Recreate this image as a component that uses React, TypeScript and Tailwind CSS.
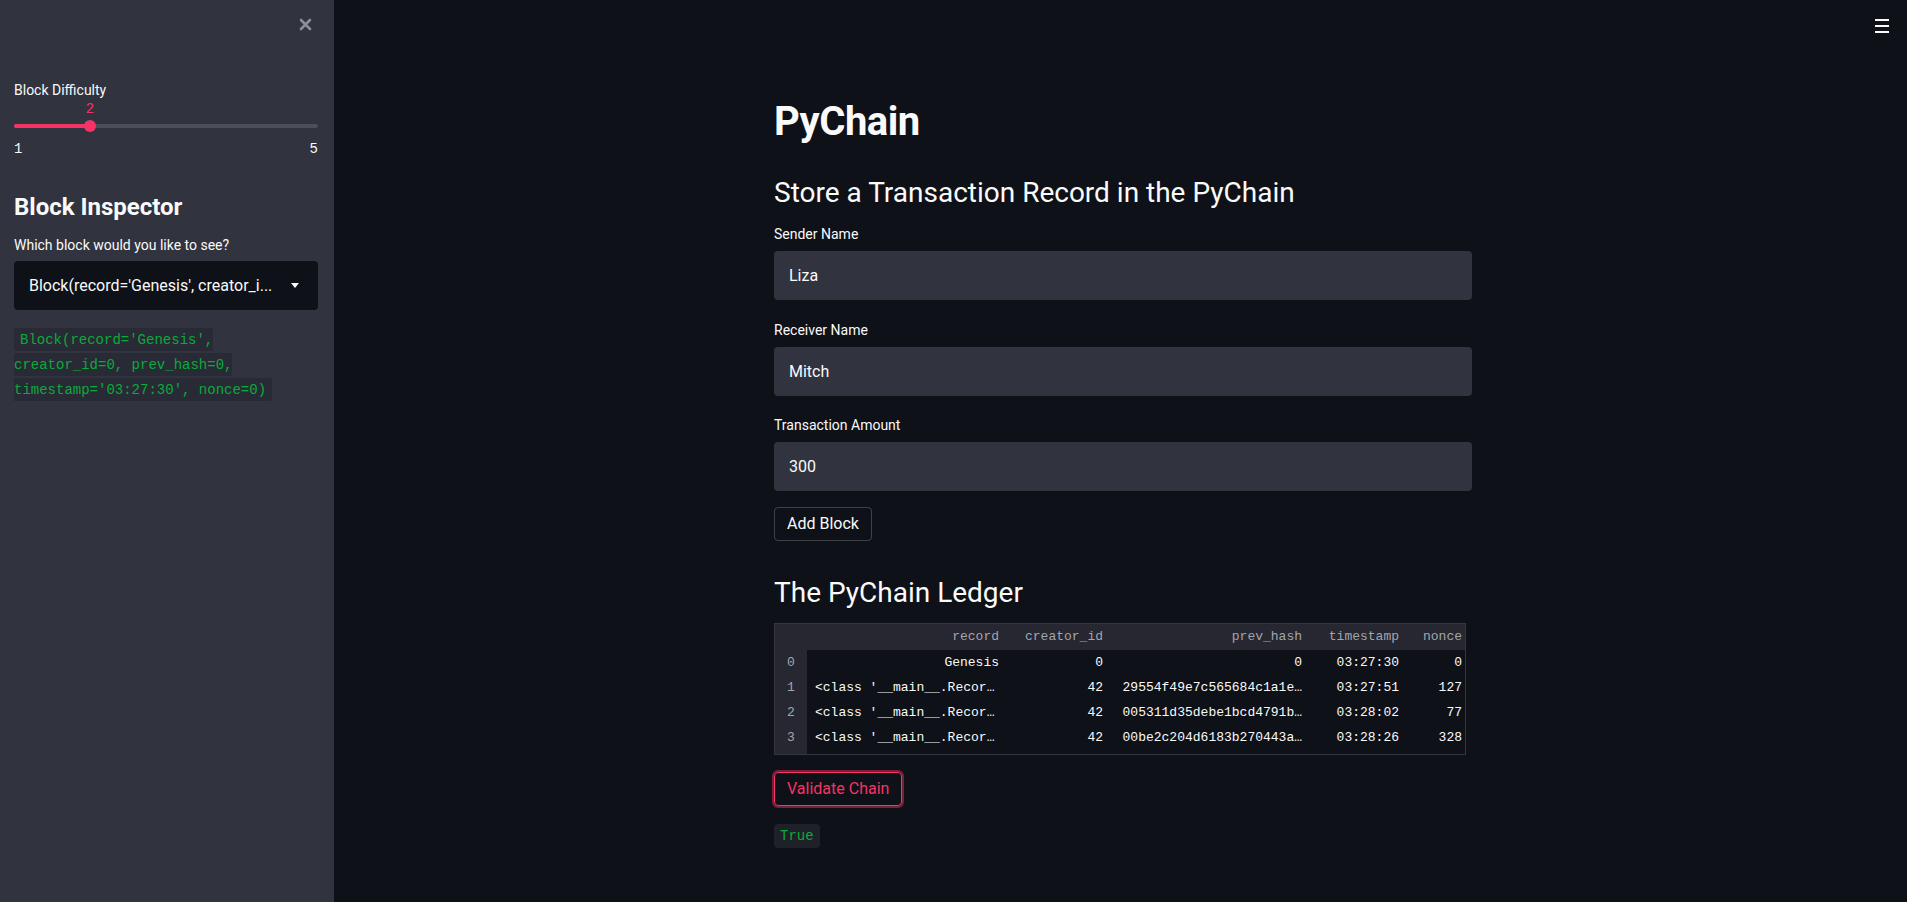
const SANS = { fontFamily: 'Roboto, "Noto Sans", sans-serif' }
const MONO = { fontFamily: '"Liberation Mono", "DejaVu Sans Mono", monospace' }

const FIELDS = [
  { label: 'Sender Name', value: 'Liza', mt: 'mt-[13px]' },
  { label: 'Receiver Name', value: 'Mitch', mt: 'mt-[20px]' },
  { label: 'Transaction Amount', value: '300', mt: 'mt-[19px]' },
]

const ROWS = [
  { i: '0', record: 'Genesis', creator: '0', prev: '0', ts: '03:27:30', nonce: '0' },
  { i: '1', record: "<class '__main__.Recor…", creator: '42', prev: '29554f49e7c565684c1a1e…', ts: '03:27:51', nonce: '127' },
  { i: '2', record: "<class '__main__.Recor…", creator: '42', prev: '005311d35debe1bcd4791b…', ts: '03:28:02', nonce: '77' },
  { i: '3', record: "<class '__main__.Recor…", creator: '42', prev: '00be2c204d6183b270443a…', ts: '03:28:26', nonce: '328' },
]

const COLS = 'grid grid-cols-[32px_202px_104px_199px_97px_63px]'

function Sidebar() {
  return (
    <aside className="w-[334px] shrink-0 bg-[#31333f] pl-[14px] pr-[16px] text-[#fafafa]">
      <div className="flex justify-end pr-[6px] pt-[18px]">
        <svg width="13" height="13" viewBox="0 0 13 13">
          <path d="M2 2 L11 11 M11 2 L2 11" stroke="#8c8e99" strokeWidth="2.6" strokeLinecap="round" />
        </svg>
      </div>

      <div className="mt-[49px] text-[14px] leading-[20px]">Block Difficulty</div>
      <div className="relative h-[37px]">
        <div className="absolute left-[76px] top-[1px] -translate-x-1/2 text-[14px] leading-[16px] text-[#f63366]" style={MONO}>
          2
        </div>
        <div className="absolute left-0 right-0 top-[24px] h-[4px] rounded-full bg-[#4c4e5a]" />
        <div className="absolute left-0 top-[24px] h-[4px] w-[76px] rounded-full bg-[#f63366]" />
        <div className="absolute left-[70px] top-[20px] h-[12px] w-[12px] rounded-full bg-[#f63366]" />
      </div>
      <div className="mt-[4px] flex justify-between text-[14px] leading-[16px]" style={MONO}>
        <span>1</span>
        <span>5</span>
      </div>

      <h2 className="mt-[35px] text-[24px] font-bold leading-[30px]">Block Inspector</h2>
      <div className="mt-[13px] text-[14px] leading-[20px]">Which block would you like to see?</div>
      <div className="mt-[6px] flex h-[49px] items-center justify-between rounded-[4px] bg-[#0e1117] pl-[15px] pr-[19px]">
        <span className="text-[16px]">Block(record='Genesis', creator_i...</span>
        <svg width="8" height="5" viewBox="0 0 8 5">
          <path d="M0 0 H8 L4 5 Z" fill="#fafafa" />
        </svg>
      </div>

      <div className="mt-[17px] text-[14px] leading-[25px]" style={MONO}>
        <code className="rounded-[3px] bg-[#282a35] px-[6px] py-[3.5px] text-[#09ab3b] [box-decoration-break:slice]">
          Block(record='Genesis', creator_id=0, prev_hash=0, timestamp='03:27:30', nonce=0)
        </code>
      </div>
    </aside>
  )
}

function Field({ label, value, mt }: { label: string; value: string; mt: string }) {
  return (
    <div className={mt}>
      <div className="text-[14px] leading-[20px]">{label}</div>
      <div className="mt-[7px] flex h-[49px] items-center rounded-[4px] bg-[#31333f] pl-[15px] text-[16px]">{value}</div>
    </div>
  )
}

function Ledger() {
  return (
    <div className="mt-[12px] h-[132px] w-[692px] overflow-hidden border border-[#34363f] bg-[#0e1117] text-[13px]" style={MONO}>
      <div className={`${COLS} h-[26px] items-center bg-[#262730] text-[#a3a5ad]`}>
        <span />
        {['record', 'creator_id', 'prev_hash', 'timestamp', 'nonce'].map((h) => (
          <span key={h} className="pr-[10px] text-right">{h}</span>
        ))}
      </div>
      {ROWS.map((r) => (
        <div key={r.i} className={`${COLS} h-[25px] items-center`}>
          <span className="flex h-full items-center justify-center bg-[#262730] text-[#a3a5ad]">{r.i}</span>
          {r.i === '0' ? (
            <span className="whitespace-nowrap pr-[10px] text-right">{r.record}</span>
          ) : (
            <span className="whitespace-nowrap pl-[8px]">{r.record}</span>
          )}
          <span className="pr-[10px] text-right">{r.creator}</span>
          <span className="whitespace-nowrap pr-[10px] text-right">{r.prev}</span>
          <span className="pr-[10px] text-right">{r.ts}</span>
          <span className="pr-[10px] text-right">{r.nonce}</span>
        </div>
      ))}
      <div className={`${COLS} h-full`}>
        <span className="bg-[#262730]" />
      </div>
    </div>
  )
}

export default function App() {
  return (
    <div className="flex h-[902px] w-full overflow-hidden bg-[#0e1117] text-[#fafafa]" style={SANS}>
      <Sidebar />
      <main className="relative flex-1">
        <div className="absolute right-[18px] top-[19px] flex w-[14px] flex-col gap-[4px]">
          <span className="h-[2px] bg-[#fafafa]" />
          <span className="h-[2px] bg-[#fafafa]" />
          <span className="h-[2px] bg-[#fafafa]" />
        </div>

        <div className="ml-[440px] w-[698px] pt-[98px]">
          <h1 className="text-[40px] font-bold leading-[48px] tracking-[-0.5px]">PyChain</h1>
          <h2 className="mt-[29px] text-[28px] font-normal leading-[36px]">Store a Transaction Record in the PyChain</h2>
          {FIELDS.map((f) => (
            <Field key={f.label} {...f} />
          ))}
          <button className="mt-[16px] h-[34px] rounded-[4px] border border-[#3f4149] px-[12px] text-[16px]">Add Block</button>

          <h2 className="mt-[34px] text-[28px] font-normal leading-[36px]">The PyChain Ledger</h2>
          <Ledger />

          <button className="mt-[17px] block h-[34px] rounded-[4px] border border-[#f63366] px-[12px] text-[16px] text-[#f63366] shadow-[0_0_0_2px_rgba(246,51,102,0.45)]">
            Validate Chain
          </button>
          <div className="mt-[18px] text-[14px] leading-[24px]" style={MONO}>
            <code className="inline-block rounded-[4px] bg-[#1f2129] px-[6px] text-[#09ab3b]">True</code>
          </div>
        </div>
      </main>
    </div>
  )
}
